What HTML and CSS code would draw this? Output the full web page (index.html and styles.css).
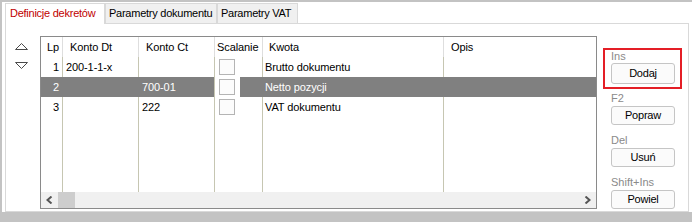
FILE: index.html
```html
<!DOCTYPE html>
<html lang="pl">
<head>
<meta charset="utf-8">
<title>Definicje dekretów</title>
<link rel="stylesheet" href="styles.css">
</head>
<body>
<div class="window">
  <div class="tabs">
    <div class="tab tab-active tab-1">Definicje dekretów</div>
    <div class="tab tab-2">Parametry dokumentu</div>
    <div class="tab tab-3">Parametry VAT</div>
  </div>
  <div class="panel">
    <div class="movers">
      <svg class="mover" width="13" height="7" viewBox="0 0 13 7"><polygon points="0.5,6.5 6.5,0.5 12.5,6.5"/></svg>
      <svg class="mover mover-down" width="13" height="7" viewBox="0 0 13 7"><polygon points="0.5,0.5 6.5,6.5 12.5,0.5"/></svg>
    </div>
    <div class="grid">
      <div class="row head">
        <div class="cell c-lp">Lp</div>
        <div class="cell c-dt">Konto Dt</div>
        <div class="cell c-ct">Konto Ct</div>
        <div class="cell c-sc">Scalanie</div>
        <div class="cell c-kw">Kwota</div>
        <div class="cell c-op">Opis</div>
      </div>
      <div class="row">
        <div class="cell c-lp">1</div>
        <div class="cell c-dt">200-1-1-x</div>
        <div class="cell c-ct"></div>
        <div class="cell c-sc"><span class="check"></span></div>
        <div class="cell c-kw">Brutto dokumentu</div>
        <div class="cell c-op"></div>
      </div>
      <div class="row sel">
        <div class="cell c-lp">2</div>
        <div class="cell c-dt"></div>
        <div class="cell c-ct">700-01</div>
        <div class="cell c-sc"><span class="check"></span></div>
        <div class="cell c-kw">Netto pozycji</div>
        <div class="cell c-op"></div>
      </div>
      <div class="row">
        <div class="cell c-lp">3</div>
        <div class="cell c-dt"></div>
        <div class="cell c-ct">222</div>
        <div class="cell c-sc"><span class="check"></span></div>
        <div class="cell c-kw">VAT dokumentu</div>
        <div class="cell c-op"></div>
      </div>
      <div class="row filler">
        <div class="cell c-lp"></div>
        <div class="cell c-dt"></div>
        <div class="cell c-ct"></div>
        <div class="cell c-sc"></div>
        <div class="cell c-kw"></div>
        <div class="cell c-op"></div>
      </div>
      <div class="hscroll">
        <div class="sb-btn"><svg width="7" height="8" viewBox="0 0 7 8"><polyline points="5.5,0.5 1.5,4 5.5,7.5"/></svg></div>
        <div class="sb-thumb"></div>
        <div class="sb-track"></div>
        <div class="sb-btn"><svg width="7" height="8" viewBox="0 0 7 8"><polyline points="1.5,0.5 5.5,4 1.5,7.5"/></svg></div>
      </div>
    </div>
    <div class="actions">
      <div class="act-group hot">
        <div class="act-label">Ins</div>
        <button class="btn">Dodaj</button>
      </div>
      <div class="act-group first">
        <div class="act-label">F2</div>
        <button class="btn">Popraw</button>
      </div>
      <div class="act-group">
        <div class="act-label">Del</div>
        <button class="btn">Usuń</button>
      </div>
      <div class="act-group">
        <div class="act-label">Shift+Ins</div>
        <button class="btn">Powiel</button>
      </div>
    </div>
  </div>
</div>
</body>
</html>
```

FILE: styles.css
```css
* {
  box-sizing: border-box;
}

html,
body {
  margin: 0;
}

body {
  width: 692px;
  height: 222px;
  overflow: hidden;
  background: #ffffff;
  border-top: 2px solid #c3c3c3;
  border-left: 2px solid #c3c3c3;
  border-bottom: 10px solid #c3c3c3;
  font-family: "Liberation Sans", Arial, sans-serif;
  font-size: 11px;
  color: #000000;
}

.window {
  height: 100%;
  display: flex;
  flex-direction: column;
  padding: 1px 3px 0 3px;
}

/* ---------- tabs ---------- */
.tabs {
  display: flex;
  align-items: flex-start;
  height: 20px;
  position: relative;
  z-index: 1;
}

.tab {
  height: 20px;
  border: 1px solid #d9d9d9;
  border-bottom: none;
  background: #f0f0f0;
  line-height: 19px;
  padding-left: 3px;
  letter-spacing: -0.25px;
  white-space: nowrap;
}

.tab-active {
  height: 21px;
  background: #ffffff;
  color: #c00000;
  padding-left: 4px;
}

.tab-1 { width: 100px; }
.tab-2 { width: 112px; }
.tab-3 { width: 81px; }

/* ---------- panel ---------- */
.panel {
  flex: 1;
  display: flex;
  border: 1px solid #d9d9d9;
  padding-top: 12px;
}

.movers {
  width: 34px;
  padding: 7px 0 0 9px;
  display: flex;
  flex-direction: column;
}

.mover {
  display: block;
}

.mover polygon {
  fill: none;
  stroke: #4a4a4a;
  stroke-width: 1;
}

.mover-down {
  margin-top: 12px;
}

/* ---------- grid ---------- */
.grid {
  width: 557px;
  height: 173px;
  border: 1px solid #8a8a8a;
  display: flex;
  flex-direction: column;
  background: #ffffff;
}

.row {
  display: grid;
  grid-template-columns: 21px 76px 76px 48px 181px 1fr;
  height: 20px;
  flex: none;
}

.cell {
  line-height: 20px;
  white-space: nowrap;
  overflow: hidden;
  border-left: 1px solid #c6c6b2;
  padding-left: 3px;
  letter-spacing: -0.1px;
}

.cell.c-lp {
  border-left: none;
  text-align: right;
  padding: 0 3px 0 0;
}

.c-sc {
  padding-left: 0;
}

.c-kw {
  padding-left: 2px;
}

.head .cell {
  border-left-color: #dedede;
}

.head .c-dt { padding-left: 7px; }
.head .c-ct { padding-left: 7px; }
.head .c-sc { padding-left: 2px; }
.head .c-kw { padding-left: 6px; }
.head .c-op { padding-left: 7px; }

.sel .cell {
  background: #808080;
  color: #ffffff;
  border-left-color: #808080;
}

.sel .c-sc {
  background: linear-gradient(to right, #ffffff 25px, #808080 25px);
  border-left-color: #c6c6b2;
}

.check {
  display: block;
  width: 16px;
  height: 16px;
  margin: 2px 0 0 4px;
  border: 1px solid #b4b4b4;
  background: #fcfcfc;
}

.filler {
  flex: 1;
  height: auto;
}

.hscroll {
  height: 16px;
  flex: none;
  display: flex;
  background: #f0f0f0;
}

.sb-btn {
  width: 17px;
  display: flex;
  align-items: center;
  justify-content: center;
}

.sb-btn svg {
  display: block;
}

.sb-btn polyline {
  fill: none;
  stroke: #555555;
  stroke-width: 2;
}

.sb-thumb {
  width: 17px;
  background: #cdcdcd;
}

.sb-track {
  flex: 1;
}

/* ---------- actions ---------- */
.actions {
  flex: 1;
  padding-top: 12px;
  display: flex;
  flex-direction: column;
}

.act-group {
  margin: 9px 0 0 14px;
  width: 64px;
}

.act-group.hot {
  margin: 0 0 0 6px;
  width: 79px;
  border: 2px solid #e41e26;
  padding: 0 5px 3px 6px;
}

.act-group.first {
  margin-top: 3px;
}

.act-label {
  height: 12px;
  line-height: 12px;
  margin-bottom: 2px;
  color: #8a8a8a;
  white-space: nowrap;
}

.hot .act-label {
  margin-bottom: 1px;
}

.btn {
  display: block;
  width: 64px;
  height: 19px;
  margin: 0;
  padding: 0;
  border: 1px solid #c5c5c5;
  border-radius: 3px;
  background: #fbfbfb;
  font-family: inherit;
  font-size: 11px;
  line-height: 17px;
  color: #000000;
  text-align: center;
  letter-spacing: -0.2px;
}

.hot .btn {
  height: 21px;
  line-height: 19px;
}
```
